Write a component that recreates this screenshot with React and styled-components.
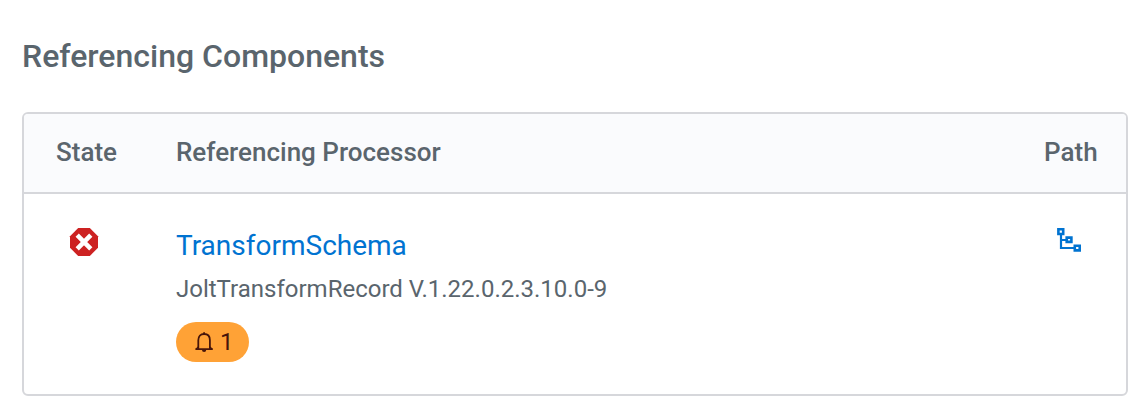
import React from "react";
import styled, { createGlobalStyle } from "styled-components";

const Global = createGlobalStyle`
  body { margin: 0; background: #fff; }
  * { box-sizing: border-box; }
`;

const Page = styled.main`
  width: 1142px;
  height: 414px;
  padding: 36px 14px 0 22px;
  font-family: Roboto, sans-serif;
  color: #5a656d;
  background: #fff;
`;

const Title = styled.h2`
  margin: 0 0 36px;
  font-size: 32px;
  line-height: 40px;
  font-weight: 500;
  white-space: nowrap;
`;

const Table = styled.section`
  height: 284px;
  border: 2px solid #d6d7db;
  border-radius: 6px;
  overflow: hidden;
`;

const Row = styled.div`
  display: grid;
  grid-template-columns: 120px 1fr 54px;
  padding: 0 28px 0 32px;
`;

const HeaderRow = styled(Row)`
  height: 80px;
  align-items: center;
  padding-bottom: 2px;
  background: #fafbfd;
  border-bottom: 2px solid #d6d7db;
`;

const HeaderCell = styled.div`
  font-size: 26px;
  line-height: 32px;
  font-weight: 500;
  white-space: nowrap;
`;

const StateCell = styled.div`
  padding: 34px 0 0 14px;
`;

const PathCell = styled.div`
  padding: 34px 0 0 13px;
`;

const Icon = styled.svg`
  display: block;
  overflow: visible;
`;

const Details = styled.div`
  display: flex;
  flex-direction: column;
  align-items: flex-start;
  padding-top: 34px;
`;

const ProcessorLink = styled.a`
  color: #0073d1;
  font-size: 28px;
  line-height: 36px;
  text-decoration: none;
`;

const Version = styled.div`
  margin-top: 9px;
  font-size: 24px;
  line-height: 32px;
`;

const Badge = styled.span`
  display: flex;
  align-items: center;
  width: 73px;
  height: 40px;
  margin-top: 17px;
  padding-left: 18px;
  gap: 6px;
  border-radius: 20px;
  background: #ffa236;
  color: #47150a;
  font-size: 24px;
  line-height: 40px;
`;

export default function App() {
  return (
    <Page>
      <Global />
      <Title>Referencing Components</Title>
      <Table>
        <HeaderRow>
          <HeaderCell>State</HeaderCell>
          <HeaderCell>Referencing Processor</HeaderCell>
          <HeaderCell>Path</HeaderCell>
        </HeaderRow>
        <Row>
          <StateCell>
            <Icon width="28" height="28" viewBox="0 0 28 28">
              <path d="M8.2 0h11.6L28 8.2v11.6L19.8 28H8.2L0 19.8V8.2z" fill="#cd2222" />
              <path d="M7.2 7.2l13.6 13.6M20.8 7.2L7.2 20.8" stroke="#fff" strokeWidth="4.6" fill="none" />
            </Icon>
          </StateCell>
          <Details>
            <ProcessorLink>TransformSchema</ProcessorLink>
            <Version>JoltTransformRecord V.1.22.0.2.3.10.0-9</Version>
            <Badge>
              <Icon width="20" height="22" viewBox="0 0 20 22" fill="none" stroke="currentColor" strokeWidth="1.8">
                <path d="M1.4 18.2h17.4M4.3 17.5V9.2C4.3 5.2 6.6 3 10.1 3s5.8 2.2 5.8 6.2v8.3" />
                <path d="M2.2 18l2.1-2M18 18l-2.1-2" strokeWidth="1.3" />
                <path d="M10.1 1.2v2" />
                <path d="M8 19h4.2a2.1 1.9 0 0 1-4.2 0z" fill="currentColor" stroke="none" />
              </Icon>
              1
            </Badge>
          </Details>
          <PathCell>
            <Icon width="26" height="26" viewBox="0 0 26 26" fill="none" stroke="#0073d1">
              <path d="M4 7v13h13M4 12h5" strokeWidth="2.2" />
              <path d="M1.4 1.3h4.8V6H1.4zM9.7 9.6h4.7v4.3H9.7zM17.8 17.8h4.9v4.6h-4.9z" strokeWidth="2.6" />
            </Icon>
          </PathCell>
        </Row>
      </Table>
    </Page>
  );
}
